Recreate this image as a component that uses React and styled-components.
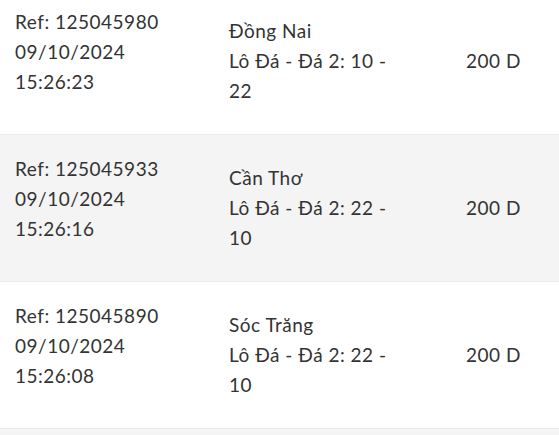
import React from 'react';
import styled, {createGlobalStyle} from 'styled-components';

const GlobalStyle = createGlobalStyle`
  html, body {
    margin: 0;
    padding: 0;
    background: #ffffff;
  }
  body {
    font-family: Lato, "Noto Sans", sans-serif;
    color: #333333;
    overflow: hidden;
  }
`;

const List = styled.div`
  display: flex;
  flex-direction: column;
  margin-top: -12px;
`;

const Row = styled.div`
  display: grid;
  grid-template-columns: 214px 237px 1fr;
  align-items: center;
  height: 147px;
  box-sizing: border-box;
  background: ${props => (props.$shaded ? '#f4f4f4' : '#ffffff')};
  border-bottom: 1px solid #ebebeb;
  font-size: 19px;
  line-height: 30px;
  letter-spacing: 0.5px;
`;

const Meta = styled.div`
  align-self: start;
  padding: 19px 0 0 15px;
`;

const Detail = styled.div`
  padding: 0 0 0 15px;
  width: 172px;
`;

const Amount = styled.div`
  padding-left: 15px;
`;

const rows = [
  {ref: '125045980', date: '09/10/2024', time: '15:26:23', place: 'Đồng Nai', bet: 'Lô Đá - Đá 2: 10 - 22'},
  {ref: '125045933', date: '09/10/2024', time: '15:26:16', place: 'Cần Thơ', bet: 'Lô Đá - Đá 2: 22 - 10'},
  {ref: '125045890', date: '09/10/2024', time: '15:26:08', place: 'Sóc Trăng', bet: 'Lô Đá - Đá 2: 22 - 10'},
  {ref: '125045841', date: '09/10/2024', time: '15:25:59', place: 'Đồng Nai', bet: 'Lô Đá - Đá 2: 10 - 22'},
];

function App () {
  return (
      <>
          <GlobalStyle/>
          <List>
              {rows.map((r, i) => (
                  <Row key={r.ref} $shaded={i % 2 === 1}>
                      <Meta>
                          <div>Ref: {r.ref}</div>
                          <div>{r.date}</div>
                          <div>{r.time}</div>
                      </Meta>
                      <Detail>
                          <div>{r.place}</div>
                          <div>{r.bet}</div>
                      </Detail>
                      <Amount>200 D</Amount>
                  </Row>
              ))}
          </List>
      </>
  );
}

export default App
